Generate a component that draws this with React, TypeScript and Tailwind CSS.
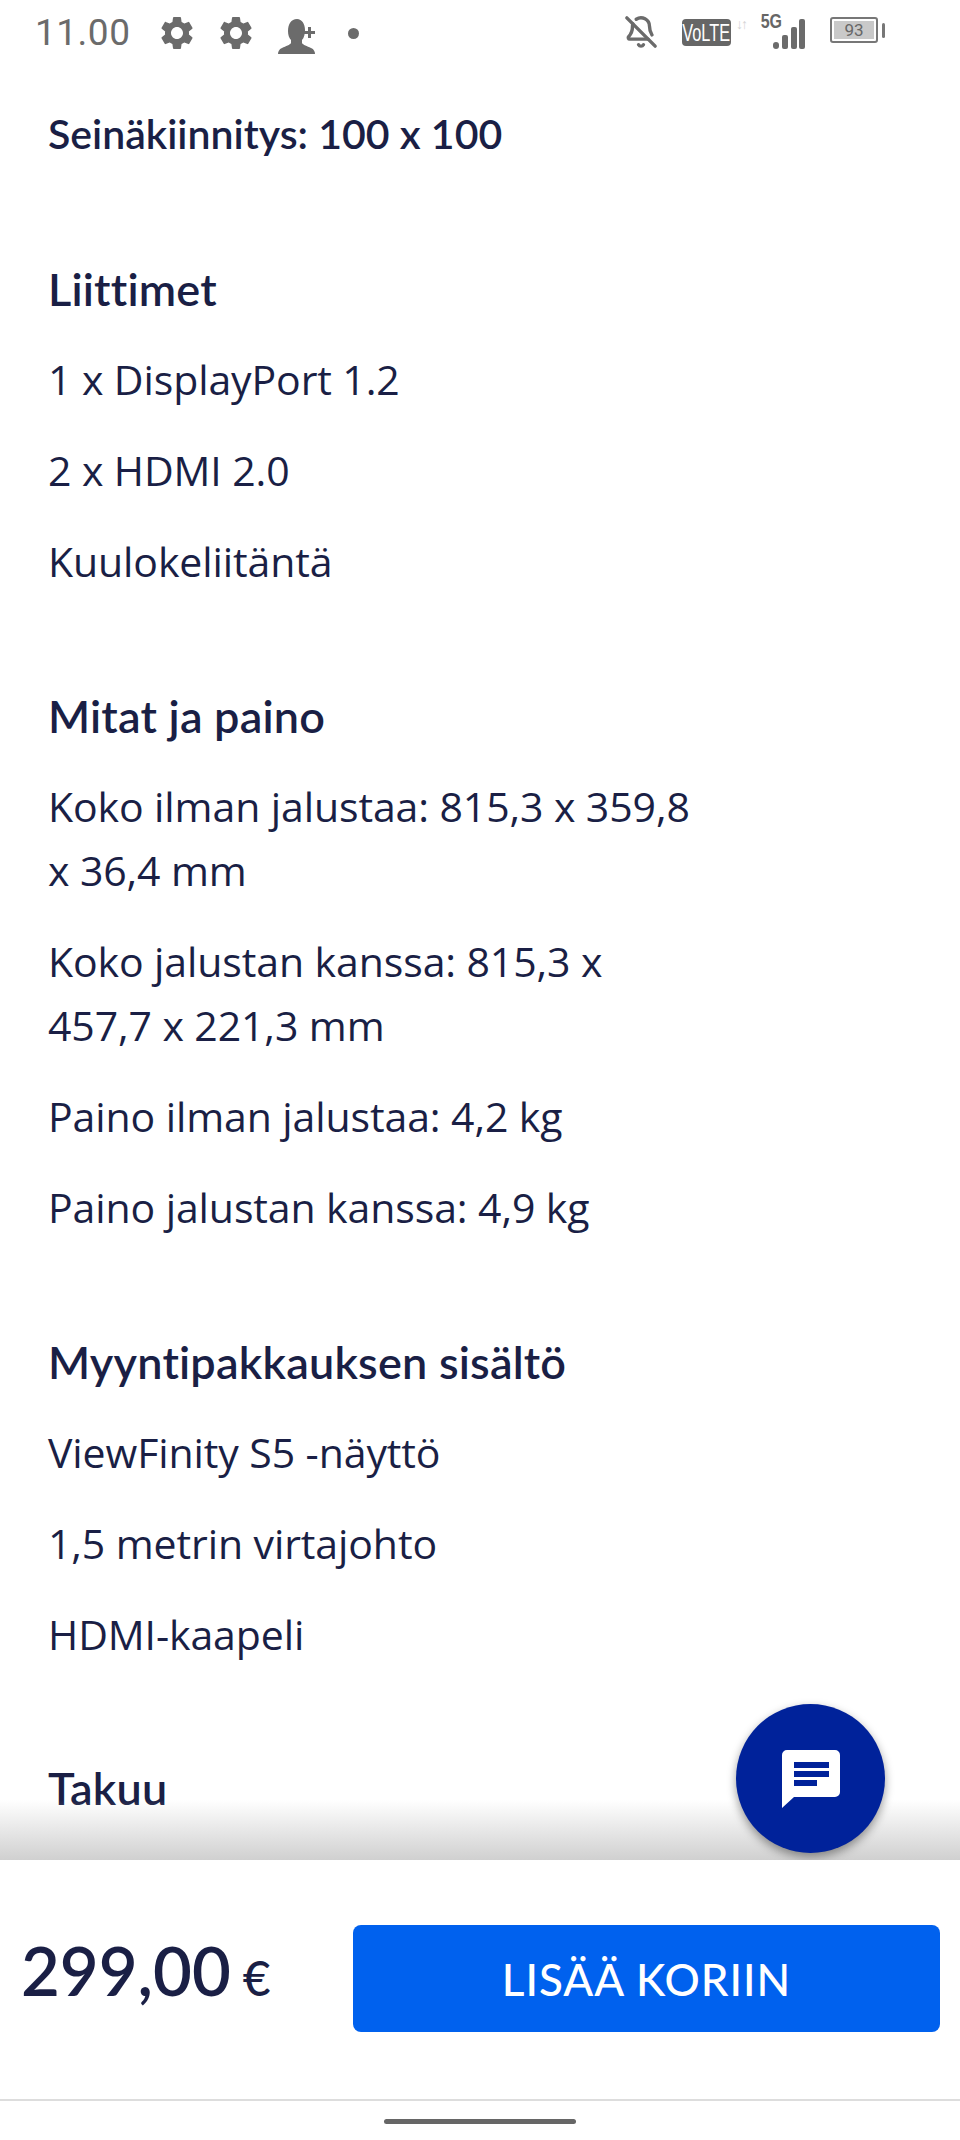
import { BellOff } from 'lucide-react';
import { MdSettings } from 'react-icons/md';

const sections = [
  {
    title: 'Liittimet',
    lines: ['1 x DisplayPort 1.2', '2 x HDMI 2.0', 'Kuulokeliitäntä'],
  },
  {
    title: 'Mitat ja paino',
    lines: [
      'Koko ilman jalustaa: 815,3 x 359,8 x 36,4 mm',
      'Koko jalustan kanssa: 815,3 x 457,7 x 221,3 mm',
      'Paino ilman jalustaa: 4,2 kg',
      'Paino jalustan kanssa: 4,9 kg',
    ],
  },
  {
    title: 'Myyntipakkauksen sisältö',
    lines: ['ViewFinity S5 -näyttö', '1,5 metrin virtajohto', 'HDMI-kaapeli'],
  },
];

const heading = "font-['Lato',sans-serif] font-semibold text-[45px] leading-[64px] tracking-[0.2px] text-[#1a1f45]";

function PersonAdd() {
  return (
    <svg width="38" height="36" viewBox="0 0 38 36" fill="#6b6b6b">
      <path d="M0 36c0-2 1-5 4-6 4-2 8-3 9-5v-3c-2-2-3-5-3-9 0-7 3-12 9-12 5 0 8 5 8 11 0 4-1 8-3 10v3c1 2 5 3 9 5 3 1 4 4 4 6z" />
      <path d="M30 9h3v4h4v3h-4v4h-3v-4h-4v-3h4z" />
    </svg>
  );
}

function SignalBars() {
  return (
    <svg width="32" height="30" viewBox="0 0 32 30" fill="#6b6b6b">
      <rect x="0" y="23" width="6" height="7" rx="3" />
      <rect x="9" y="16" width="6" height="14" rx="2" />
      <rect x="18" y="8" width="6" height="22" rx="2" />
      <rect x="26" y="0" width="6" height="30" rx="2" />
    </svg>
  );
}

function StatusBar() {
  return (
    <div className="flex h-[64px] shrink-0 items-start justify-between pl-[35px] pr-[75px] pt-[12px] text-[#6b6b6b]">
      <div className="flex items-center">
        <span className="font-['Roboto',sans-serif] text-[37px] leading-[36px] tracking-[0.5px]">11.00</span>
        <MdSettings className="ml-[27px] h-[40px] w-[40px]" />
        <MdSettings className="ml-[19px] h-[40px] w-[40px]" />
        <span className="ml-[22px] mt-[6px]">
          <PersonAdd />
        </span>
        <span className="ml-[32px] h-[11px] w-[11px] rounded-full bg-[#6b6b6b]" />
      </div>
      <div className="flex items-start">
        <BellOff className="mt-[3px] h-[34px] w-[34px]" strokeWidth={2.4} />
        <span className="ml-[24px] mt-[7px] flex h-[27px] w-[49px] items-center justify-center overflow-hidden rounded-[4px] bg-[#666666] font-['Liberation_Sans',sans-serif] text-[24px] leading-none text-white">
          <span className="scale-x-[0.68] whitespace-nowrap">VoLTE</span>
        </span>
        <span className="ml-[5px] mt-[4px] w-[17px] text-[14px] leading-[15px] tracking-[-2px] text-[#d4d4d4]">↓↑</span>
        <span className="relative ml-[5px] h-[36px] w-[47px]">
          <span className="absolute left-0 top-[2px] scale-x-[0.8] font-['Liberation_Sans',sans-serif] text-[20px] font-bold leading-[15px] text-[#666666]">5G</span>
          <span className="absolute bottom-[-1px] right-0">
            <SignalBars />
          </span>
        </span>
        <span className="ml-[25px] mt-[5px] flex h-[26px] w-[48px] items-center rounded-[3px] border-2 border-[#777777] p-[2px]">
          <span className="flex h-full w-full items-center justify-center bg-[#c9c9c9] font-['Roboto',sans-serif] text-[17px] leading-none text-[#666666]">93</span>
        </span>
        <span className="ml-[4px] mt-[11px] h-[15px] w-[3px] rounded-sm bg-[#777777]" />
      </div>
    </div>
  );
}

function ChatIcon() {
  return (
    <svg width="58" height="58" viewBox="0 0 58 58">
      <path fill="#fff" d="M5 0h48a5 5 0 0 1 5 5v37a5 5 0 0 1-5 5H12L0 58V5a5 5 0 0 1 5-5z" />
      <rect x="12" y="12" width="35" height="6" fill="#00229a" />
      <rect x="12" y="21" width="35" height="6" fill="#00229a" />
      <rect x="12" y="30" width="23" height="6" fill="#00229a" />
    </svg>
  );
}

export default function App() {
  return (
    <div className="flex h-[2140px] w-[960px] flex-col overflow-hidden bg-white font-['Open_Sans',sans-serif] text-[#1a1f45]">
      <StatusBar />

      <main className="relative min-h-0 flex-1 overflow-hidden px-[48px]">
        <p className="mt-[38px] font-['Lato',sans-serif] text-[41px] font-semibold leading-[64px]">Seinäkiinnitys: 100 x 100</p>

        {sections.map((section) => (
          <section key={section.title} className="mt-[91px]">
            <h2 className={heading}>{section.title}</h2>
            <div className="mt-[26px] flex w-[660px] flex-col gap-[27px]">
              {section.lines.map((line) => (
                <p key={line} className="text-[41px] leading-[64px] tracking-[-0.1px]">
                  {line}
                </p>
              ))}
            </div>
          </section>
        ))}

        <section className="mt-[90px]">
          <h2 className={heading}>Takuu</h2>
        </section>

        <div className="pointer-events-none absolute inset-x-0 bottom-0 h-[60px] bg-gradient-to-b from-white/0 to-[#d0d0d0]" />
        <button className="absolute bottom-[7px] left-[736px] flex h-[149px] w-[149px] items-center justify-center rounded-full bg-[#00229a] shadow-[0_4px_10px_rgba(0,0,0,0.4)]">
          <ChatIcon />
        </button>
      </main>

      <div className="flex h-[280px] shrink-0 flex-col bg-white">
        <div className="flex justify-between pl-[21px] pr-[20px] pt-[65px]">
          <p className="flex items-baseline self-start font-['Lato',sans-serif] font-semibold text-[#1a1f45]">
            <span className="text-[67px] leading-[90px]">299,00</span>
            <span className="ml-[12px] text-[48px] font-medium leading-[90px]">€</span>
          </p>
          <button className="h-[107px] w-[587px] rounded-[8px] bg-[#0061ee] font-['Lato',sans-serif] text-[44px] font-medium tracking-[1px] text-white">
            LISÄÄ KORIIN
          </button>
        </div>
        <div className="mt-[67px] h-[2px] shrink-0 bg-[#dddddd]" />
        <div className="mt-[18px] flex justify-center">
          <div className="h-[5px] w-[192px] rounded-full bg-[#666666]" />
        </div>
      </div>
    </div>
  );
}
